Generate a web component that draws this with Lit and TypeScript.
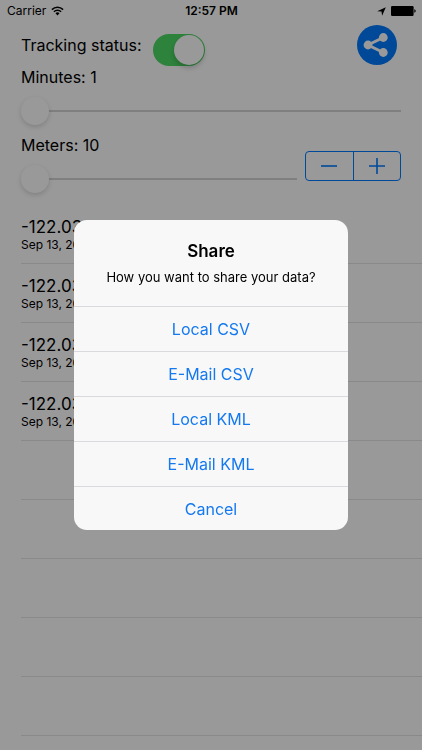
import { LitElement, html, css } from "lit";
import { customElement, state } from "lit/decorators.js";

interface Point {
  longitude: string;
  date: string;
}

@customElement("status-bar")
export class StatusBar extends LitElement {
  static styles = css`
    :host {
      display: grid;
      grid-template-columns: 1fr auto 1fr;
      align-items: center;
      height: 22px;
      padding: 0 6px 0 7px;
      font-size: 12px;
      line-height: 16px;
    }
    .left,
    .right {
      display: flex;
      align-items: center;
      gap: 5px;
    }
    .right {
      justify-content: flex-end;
    }
    .time {
      font-weight: 600;
    }
    svg {
      display: block;
    }
  `;

  render() {
    return html`
      <div class="left">
        <span>Carrier</span>
        <svg width="13" height="10" viewBox="0 0 13 10" aria-label="Wi-Fi" role="img">
          <path d="M0.9 3.6A8 8 0 0 1 12.1 3.6" fill="none" stroke="#000" stroke-width="1.5" />
          <path d="M2.9 5.7A5.1 5.1 0 0 1 10.1 5.7" fill="none" stroke="#000" stroke-width="1.5" />
          <path d="M4.5 7.2A2.9 2.9 0 0 1 8.5 7.2L6.5 9.5Z" />
        </svg>
      </div>
      <span class="time">12:57 PM</span>
      <div class="right">
        <svg width="9" height="9" viewBox="0 0 9 9" aria-label="Location" role="img">
          <path d="M8.8 0.2L5.1 8.8L4.5 4.6L0.2 4.2Z" />
        </svg>
        <svg width="25" height="10" viewBox="0 0 25 10" aria-label="Battery full" role="img">
          <rect x="0" y="0" width="22.6" height="10" rx="1.2" />
          <path d="M23.3 3.2C24.3 3.5 24.7 4.2 24.7 5S24.3 6.5 23.3 6.8Z" />
        </svg>
      </div>
    `;
  }
}

@customElement("share-dialog")
export class ShareDialog extends LitElement {
  private actions = ["Local CSV", "E-Mail CSV", "Local KML", "E-Mail KML", "Cancel"];

  static styles = css`
    :host {
      position: fixed;
      inset: 0;
      display: flex;
      align-items: center;
      justify-content: center;
      background: rgba(0, 0, 0, 0.4);
    }
    .alert {
      width: 65%;
      max-width: 280px;
      border-radius: 13px;
      overflow: hidden;
      background: #f8f8f8;
      text-align: center;
    }
    .head {
      padding: 20px 16px;
    }
    h1 {
      margin: 0;
      font-size: 17px;
      line-height: 22px;
      font-weight: 600;
    }
    p {
      margin: 6px 0 0;
      font-size: 13px;
      line-height: 18px;
    }
    .action {
      display: block;
      box-sizing: border-box;
      width: 100%;
      height: 45px;
      margin: 0;
      padding: 0;
      border: 0;
      border-top: 1px solid #dadade;
      background: none;
      color: #1479f0;
      font: inherit;
      font-size: 16px;
    }
    .action:last-child {
      height: 44px;
    }
  `;

  render() {
    return html`
      <div class="alert" role="alertdialog" aria-modal="true" aria-labelledby="title" aria-describedby="message">
        <div class="head">
          <h1 id="title">Share</h1>
          <p id="message">How you want to share your data?</p>
        </div>
        ${this.actions.map((a) => html`<button class="action" type="button">${a}</button>`)}
      </div>
    `;
  }
}

@customElement("app-root")
export class AppRoot extends LitElement {
  @state() private minutes = 1;
  @state() private meters = 10;

  private points: Point[] = Array.from({ length: 4 }, () => ({
    longitude: "-122.03",
    date: "Sep 13, 2016",
  }));
  private emptyRows = Array.from({ length: 5 });

  static styles = css`
    :host {
      display: block;
      min-height: 100vh;
      background: #fff;
      color: #000;
      font-family: Inter, "Liberation Sans", sans-serif;
    }
    .controls {
      padding: 2px 21px 0;
    }
    .top {
      display: flex;
      align-items: flex-start;
      gap: 12px;
    }
    label {
      display: block;
      font-size: 16px;
      line-height: 22px;
    }
    .top label {
      margin-top: 10px;
    }
    .switch {
      appearance: none;
      box-sizing: border-box;
      width: 52px;
      height: 32px;
      margin: 10px 0 0;
      padding: 1px;
      border-radius: 16px;
      background: #e5e5ea;
      display: flex;
    }
    .switch::before {
      content: "";
      width: 30px;
      height: 30px;
      border-radius: 50%;
      background: #fff;
      box-shadow: 0 3px 5px rgba(0, 0, 0, 0.2);
    }
    .switch:checked {
      background: #4cd964;
      justify-content: flex-end;
    }
    .share {
      width: 40px;
      height: 40px;
      margin: 1px 4px 0 auto;
      padding: 0;
      border: 0;
      border-radius: 50%;
      background: #007aff;
    }
    .share svg {
      display: block;
    }
    .range {
      appearance: none;
      display: block;
      width: 100%;
      height: 28px;
      margin: 9px 0 0;
      background: linear-gradient(#d4d4d4, #d4d4d4) center / 100% 2px no-repeat;
    }
    .range::-webkit-slider-thumb {
      appearance: none;
      width: 28px;
      height: 28px;
      border-radius: 50%;
      background: #fff;
      box-shadow: 0 2px 5px rgba(0, 0, 0, 0.16);
    }
    .meters {
      display: flex;
      align-items: flex-end;
      gap: 8px;
      margin-top: 9px;
    }
    .meters .field {
      flex: 1;
      min-width: 0;
    }
    .stepper {
      display: flex;
      box-sizing: border-box;
      width: 96px;
      height: 30px;
      margin-bottom: 12px;
      border: 1px solid #007aff;
      border-radius: 4px;
    }
    .step {
      flex: 1;
      display: grid;
      place-items: center;
      padding: 0;
      border: 0;
      background: none;
    }
    .step + .step {
      border-left: 1px solid #007aff;
    }
    .points {
      list-style: none;
      margin: 0;
      padding: 12px 0 0 21px;
    }
    .row {
      box-sizing: border-box;
      height: 59px;
      padding-top: 12px;
      border-bottom: 1px solid #e4e4e7;
    }
    .longitude,
    .date {
      display: block;
    }
    .longitude {
      font-size: 17px;
      line-height: 20px;
    }
    .date {
      font-size: 12px;
      line-height: 15px;
    }
  `;

  private step(by: number) {
    this.meters = Math.max(10, this.meters + by);
  }

  render() {
    return html`
      <status-bar></status-bar>
      <main class="controls">
        <div class="top">
          <label for="tracking">Tracking status:</label>
          <input class="switch" id="tracking" type="checkbox" role="switch" checked />
          <button class="share" type="button" aria-label="Share">
            <svg width="40" height="40" viewBox="0 0 40 40">
              <path d="M26.3 12.5L11 20L26.3 27.5" fill="none" stroke="#fff" stroke-width="3" />
              <circle cx="11" cy="20" r="4.4" fill="#fff" />
              <circle cx="26.3" cy="12.5" r="4.4" fill="#fff" />
              <circle cx="26.3" cy="27.5" r="4.4" fill="#fff" />
            </svg>
          </button>
        </div>
        <div class="minutes">
          <label for="minutes">Minutes: ${this.minutes}</label>
          <input
            class="range"
            id="minutes"
            type="range"
            min="1"
            max="60"
            .value=${String(this.minutes)}
            @input=${(e: Event) => (this.minutes = Number((e.target as HTMLInputElement).value))}
          />
        </div>
        <div class="meters">
          <div class="field">
            <label for="meters">Meters: ${this.meters}</label>
            <input
              class="range"
              id="meters"
              type="range"
              min="10"
              max="1000"
              .value=${String(this.meters)}
              @input=${(e: Event) => (this.meters = Number((e.target as HTMLInputElement).value))}
            />
          </div>
          <div class="stepper" role="group" aria-label="Adjust meters">
            <button class="step" type="button" aria-label="Decrease" @click=${() => this.step(-1)}>
              <svg width="16" height="16" viewBox="0 0 16 16">
                <path d="M0 8H16" stroke="#007aff" stroke-width="1.6" />
              </svg>
            </button>
            <button class="step" type="button" aria-label="Increase" @click=${() => this.step(1)}>
              <svg width="16" height="16" viewBox="0 0 16 16">
                <path d="M0 8H16M8 0V16" stroke="#007aff" stroke-width="1.6" />
              </svg>
            </button>
          </div>
        </div>
      </main>
      <ul class="points">
        ${this.points.map(
          (p) => html`<li class="row">
            <span class="longitude">${p.longitude}</span>
            <span class="date">${p.date}</span>
          </li>`
        )}
        ${this.emptyRows.map(() => html`<li class="row" aria-hidden="true"></li>`)}
      </ul>
      <share-dialog></share-dialog>
    `;
  }
}
